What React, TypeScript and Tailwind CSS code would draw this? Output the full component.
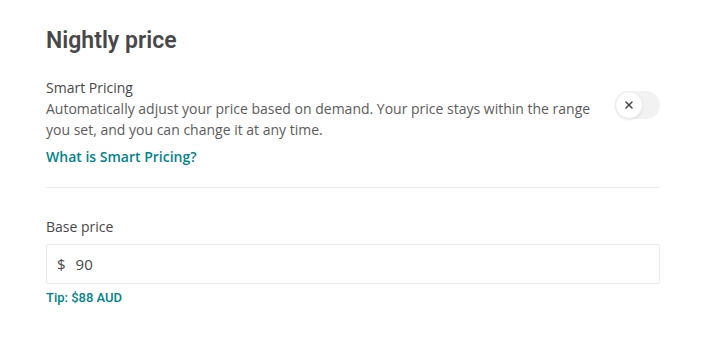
import { X } from "lucide-react";

export default function App() {
  return (
    <div className="min-h-[343px] w-[702px] bg-white pl-[46px] pr-[42px] pt-[27px] font-['Open_Sans',sans-serif] text-[#484848]">
      <h1 className="font-['Roboto',sans-serif] text-[23px] font-semibold leading-[28px] text-[#484848]">
        Nightly price
      </h1>

      <div className="mt-[22px] flex items-start justify-between gap-6">
        <div className="w-[560px]">
          <p className="text-[14px] leading-[21px]">Smart Pricing</p>
          <p className="text-[14px] leading-[21px] text-[#5c5c5c]">
            Automatically adjust your price based on demand. Your price stays within the range you set, and you can change
            it at any time.
          </p>
          <a className="mt-[6px] block text-[14px] font-semibold leading-[21px] text-[#008489]">What is Smart Pricing?</a>
        </div>
        <button className="mt-[14px] flex h-[28px] w-[45px] shrink-0 items-center rounded-full bg-[#f2f2f2]">
          <span className="flex h-[28px] w-[28px] items-center justify-center rounded-full border border-[#ececec] bg-white shadow-[0_1px_2px_rgba(0,0,0,0.08)]">
            <X className="h-[12px] w-[12px] text-[#484848]" strokeWidth={3} />
          </span>
        </button>
      </div>

      <div className="mt-[20px] border-t border-[#ebebeb]" />

      <p className="mt-[28px] text-[14px] leading-[21px]">Base price</p>
      <div className="mt-[7px] flex h-[40px] items-center rounded-[2px] border border-[#ebebeb] px-[10px] text-[15px]">
        <span className="text-[#484848]">$</span>
        <span className="ml-[10px] text-[#484848]">90</span>
      </div>
      <p className="mt-[6px] font-['Roboto',sans-serif] text-[13px] font-medium leading-[16px] text-[#008489]">
        Tip: $88 AUD
      </p>
    </div>
  );
}
